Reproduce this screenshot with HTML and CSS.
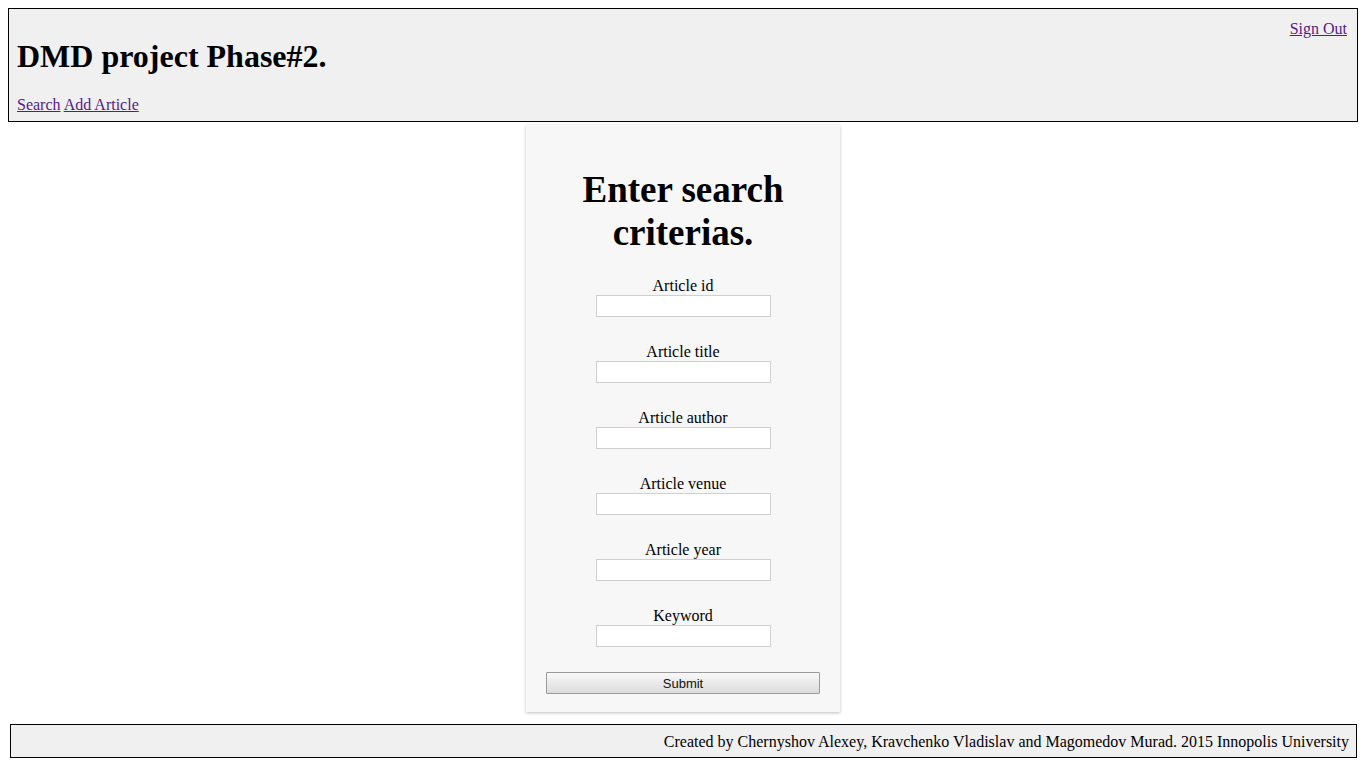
FILE: index.html
```html
<!DOCTYPE html>
<html>
<head>
<meta charset="utf-8">
<title>DMD project Phase#2.</title>
<link rel="stylesheet" href="styles.css">
</head>
<body>
<header class="site-header">
  <div class="signout"><a href="#">Sign Out</a></div>
  <h1 class="site-title">DMD project Phase#2.</h1>
  <nav class="nav"><a href="#">Search</a> <a href="#">Add Article</a></nav>
</header>
<main class="main">
  <form class="card">
    <h1 class="card-title">Enter search criterias.</h1>
    <div class="fields">
      <label class="field"><span>Article id</span><input type="text"></label>
      <label class="field"><span>Article title</span><input type="text"></label>
      <label class="field"><span>Article author</span><input type="text"></label>
      <label class="field"><span>Article venue</span><input type="text"></label>
      <label class="field"><span>Article year</span><input type="text"></label>
      <label class="field"><span>Keyword</span><input type="text"></label>
    </div>
    <button type="button" class="submit">Submit</button>
  </form>
</main>
<footer class="site-footer">Created by Chernyshov Alexey, Kravchenko Vladislav and Magomedov Murad. 2015 Innopolis University</footer>
</body>
</html>
```
FILE: styles.css
```css
html, body {
  margin: 0;
  padding: 0;
}
body {
  margin: 8px;
  font-family: "Liberation Serif", "Times New Roman", serif;
  font-size: 16px;
  color: #000;
  background: #fff;
}
a {
  color: #551a8b;
  text-decoration: underline;
}
.site-header {
  border: 1px solid #000;
  background: #f0f0f0;
  padding: 8px 8px 7px 8px;
}
.signout {
  float: right;
  margin-top: 3px;
  margin-right: 2px;
}
.site-title {
  font-size: 32px;
  font-weight: bold;
  margin: 21px 0 21px 0;
}
.nav {
  line-height: 18px;
}
.main {
  display: flex;
  justify-content: center;
  padding-top: 3px;
}
.card {
  width: 274px;
  background: #f7f7f7;
  padding: 20px 20px 18px 20px;
  box-shadow: 0 1px 3px rgba(0, 0, 0, 0.25);
  display: flex;
  flex-direction: column;
  align-items: center;
}
.card-title {
  font-size: 37px;
  font-weight: bold;
  text-align: center;
  line-height: 43px;
  margin: 23px 0 23px 0;
}
.fields {
  display: flex;
  flex-direction: column;
  gap: 26px;
  align-items: center;
}
.field {
  display: flex;
  flex-direction: column;
  align-items: center;
  line-height: 18px;
}
.field input {
  width: 175px;
  height: 22px;
  box-sizing: border-box;
  border: 1px solid #cfcfcf;
  background: #fff;
  margin: 0;
  padding: 1px 2px;
}
.submit {
  margin-top: 25px;
  width: 274px;
  height: 22px;
  box-sizing: border-box;
  border: 1px solid #9a9a9a;
  border-radius: 1px;
  background: linear-gradient(#f8f8f8, #dcdcdc);
  font-family: "Liberation Sans", Arial, sans-serif;
  font-size: 13px;
  color: #111;
  padding: 0;
}
.site-footer {
  margin: 12px 1px 0 2px;
  border: 1px solid #000;
  background: #f0f0f0;
  padding: 8px 7px 6px 8px;
  text-align: right;
  line-height: 18px;
}
```
